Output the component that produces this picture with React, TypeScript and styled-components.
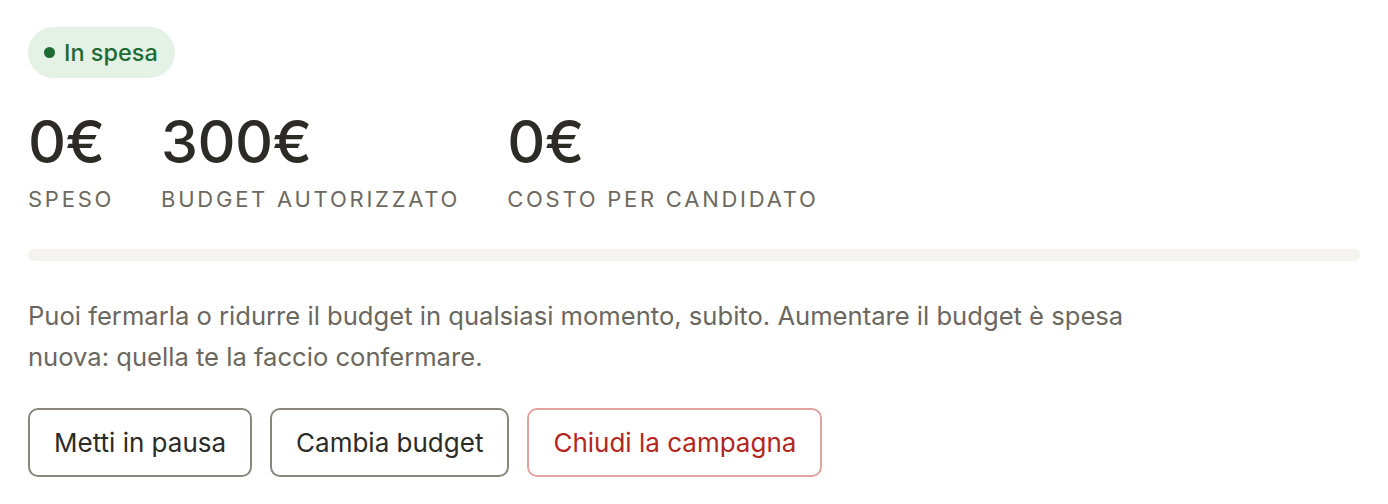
import React from "react";
import styled, { createGlobalStyle } from "styled-components";

const Global = createGlobalStyle`
  html, body { margin: 0; padding: 0; background: #ffffff; }
  body { font-family: Inter, "Noto Sans", "Liberation Sans", sans-serif; -webkit-font-smoothing: antialiased; }
`;

const Page = styled.div`
  padding: 27px 28px 28px 28px;
  display: flex;
  flex-direction: column;
  align-items: flex-start;
`;

const Badge = styled.div`
  display: inline-flex;
  align-items: center;
  gap: 9px;
  height: 51px;
  padding: 0 17px 0 16px;
  border-radius: 26px;
  background: #e4f2e6;
  color: #1e6b34;
  font-size: 23.5px;
  font-weight: 500;
  box-sizing: border-box;
`;

const Dot = styled.span`
  width: 11px;
  height: 11px;
  border-radius: 50%;
  background: #1e6b34;
`;

const Stats = styled.div`
  display: flex;
  gap: 47px;
  margin-top: 32px;
`;

const Stat = styled.div`
  display: flex;
  flex-direction: column;
`;

const Value = styled.div`
  font-size: 59px;
  line-height: 64px;
  font-weight: 500;
  color: #2d2b26;
  letter-spacing: -0.01em;
`;

const Label = styled.div`
  margin-top: 12px;
  font-size: 22px;
  line-height: 26px;
  letter-spacing: 0.125em;
  text-transform: uppercase;
  color: #6d6961;
`;

const Track = styled.div`
  align-self: stretch;
  height: 12px;
  border-radius: 6px;
  background: #f4f3ee;
  margin-top: 37px;
  overflow: hidden;
`;

const Fill = styled.div`
  height: 100%;
  background: #1e6b34;
`;

const Note = styled.p`
  margin: 34px 0 0 0;
  max-width: 1110px;
  font-size: 25.6px;
  line-height: 41px;
  color: #6b675f;
`;

const Actions = styled.div`
  display: flex;
  gap: 18px;
  margin-top: 31px;
`;

const Button = styled.button<{ $danger?: boolean }>`
  height: 69px;
  padding: 0 24px;
  border-radius: 10px;
  border: 2px solid ${(p) => (p.$danger ? "#e2a3a0" : "#8a867d")};
  background: #ffffff;
  color: ${(p) => (p.$danger ? "#b3261e" : "#2d2b26")};
  font-family: inherit;
  font-size: 26px;
  cursor: pointer;
`;

const stats = [
  { value: "0€", label: "Speso" },
  { value: "300€", label: "Budget autorizzato" },
  { value: "0€", label: "Costo per candidato" },
];

export default function App() {
  const spent = 0;
  const budget = 300;
  return (
    <>
      <Global />
      <Page>
        <Badge>
          <Dot />
          In spesa
        </Badge>
        <Stats>
          {stats.map((s) => (
            <Stat key={s.label}>
              <Value>{s.value}</Value>
              <Label>{s.label}</Label>
            </Stat>
          ))}
        </Stats>
        <Track>
          <Fill style={{ width: `${(spent / budget) * 100}%` }} />
        </Track>
        <Note>
          Puoi fermarla o ridurre il budget in qualsiasi momento, subito. Aumentare il budget è spesa nuova: quella te la faccio confermare.
        </Note>
        <Actions>
          <Button>Metti in pausa</Button>
          <Button>Cambia budget</Button>
          <Button $danger>Chiudi la campagna</Button>
        </Actions>
      </Page>
    </>
  );
}
